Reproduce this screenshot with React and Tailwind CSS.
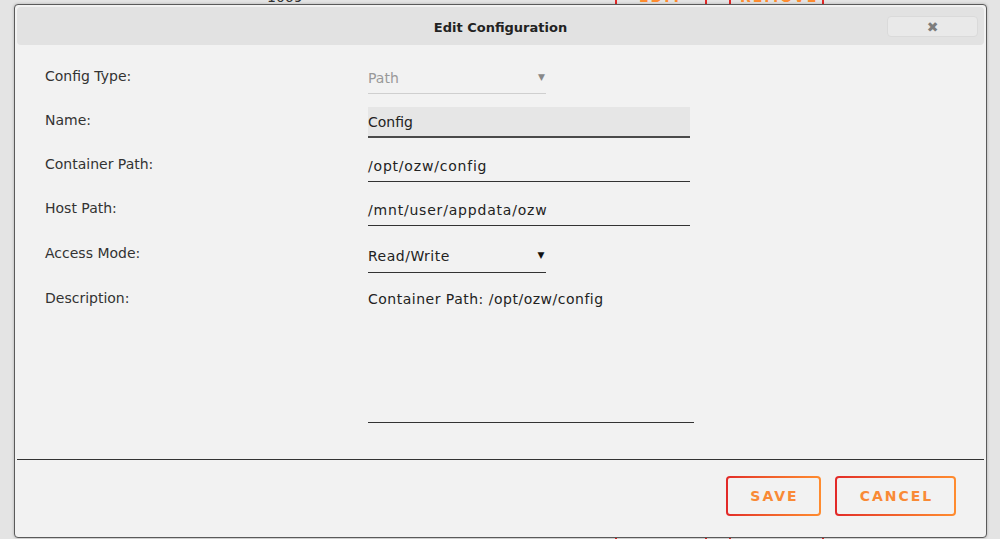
import React from "react";

const font = { fontFamily: '"DejaVu Sans", "Liberation Sans", sans-serif' };

function GradientButton({ label, width }) {
  return (
    <div className={`rounded-[4px] bg-gradient-to-r from-[#e22828] to-[#ff8c2f] p-[2px] ${width}`}>
      <div className="flex h-[36px] items-center justify-center rounded-[2px] bg-[#f2f2f2] pl-[2px] text-[14px] font-bold tracking-[2px] text-[#f98a36]">
        {label}
      </div>
    </div>
  );
}

function Row({ label, children, className = "" }) {
  return (
    <div className={`flex ${className}`}>
      <div className="w-[323px] shrink-0 pt-[3px] text-[14px] leading-[20px] text-[#333]">{label}</div>
      {children}
    </div>
  );
}

function Underlined({ value }) {
  return (
    <div className="flex h-[31px] w-[322px] items-center border-b border-[#333] text-[14px] tracking-[0.8px] text-[#222]">
      {value}
    </div>
  );
}

function Select({ value, muted }) {
  return (
    <div
      className={`flex w-[178px] items-center justify-between border-b text-[14px] ${
        muted ? "h-[31px] border-[#cfcfcf] text-[#999]" : "h-[33px] border-[#333] tracking-[0.5px] text-[#222]"
      }`}
    >
      <span>{value}</span>
      <span className={`mr-[1px] text-[9px] ${muted ? "text-[#888]" : "text-[#111]"}`}>▼</span>
    </div>
  );
}

function BackgroundRow({ className, first }) {
  return (
    <div className={`flex h-[17px] text-[14px] ${className}`}>
      <span className="ml-[267px] w-[348px] text-[#333]">{first}</span>
      <span className="h-full border-l-2 border-[#e22828]" />
      <span className="ml-[22px] w-[66px] font-bold tracking-[2px] text-[#ff8c2f]">EDIT</span>
      <span className="h-full border-l-2 border-[#e22828]" />
      <span className="ml-[22px] h-full border-l-2 border-[#e22828]" />
      <span className="ml-[9px] w-[82px] font-bold tracking-[2px] text-[#ff8c2f]">REMOVE</span>
      <span className="h-full border-l-2 border-[#e22828]" />
    </div>
  );
}

export default function App() {
  return (
    <div className="relative h-[539px] w-[1000px] overflow-hidden bg-[#e4e4e4]" style={font}>
      {/* page content beneath the dialog */}
      <BackgroundRow className="-mt-[11px] items-center" first="1069" />
      <div className="absolute left-0 top-[535px] w-full">
        <BackgroundRow className="items-start" first="0000 0000 0000 0000 0000" />
      </div>

      {/* dialog */}
      <div className="absolute left-[14px] top-[4px] flex h-[534px] w-[973px] flex-col rounded-[4px] border border-[#5a5a5a] bg-[#f2f2f2] p-[2px] shadow-[0_0_3px_rgba(0,0,0,0.25)]">
        <div className="relative flex h-[38px] shrink-0 items-center justify-center rounded-[4px] bg-[#e2e2e2] pt-[3px]">
          <span className="text-[13px] font-bold text-[#222]">Edit Configuration</span>
          <div className="absolute right-[6px] top-[9px] flex h-[21px] w-[91px] items-center justify-center rounded-[4px] border border-[#dadada] bg-[#e9e9e9] text-[14px] font-bold leading-none text-[#7d7d7d]">
            ✖
          </div>
        </div>

        <div className="flex h-[415px] flex-col border-b border-[#333] pl-[28px] pt-[18px]">
          <Row label="Config Type:" className="mb-[13px]">
            <Select value="Path" muted />
          </Row>
          <Row label="Name:" className="mb-[13px]">
            <div className="flex h-[31px] w-[322px] items-center border-b-2 border-[#4a4a4a] bg-[#e6e6e6] pt-[2px] text-[14px] text-[#222]">
              Config
            </div>
          </Row>
          <Row label="Container Path:" className="mb-[13px]">
            <Underlined value="/opt/ozw/config" />
          </Row>
          <Row label="Host Path:" className="mb-[14px]">
            <Underlined value="/mnt/user/appdata/ozw" />
          </Row>
          <Row label="Access Mode:" className="mb-[12px]">
            <Select value="Read/Write" />
          </Row>
          <Row label="Description:">
            <div className="h-[138px] w-[326px] border-b border-[#333] pt-[3px] text-[14px] leading-[22px] tracking-[0.5px] text-[#222]">
              Container Path: /opt/ozw/config
            </div>
          </Row>
        </div>

        <div className="flex flex-1 items-start justify-end gap-[14px] pr-[28px] pt-[16px]">
          <GradientButton label="SAVE" width="w-[95px]" />
          <GradientButton label="CANCEL" width="w-[121px]" />
        </div>
      </div>
    </div>
  );
}
